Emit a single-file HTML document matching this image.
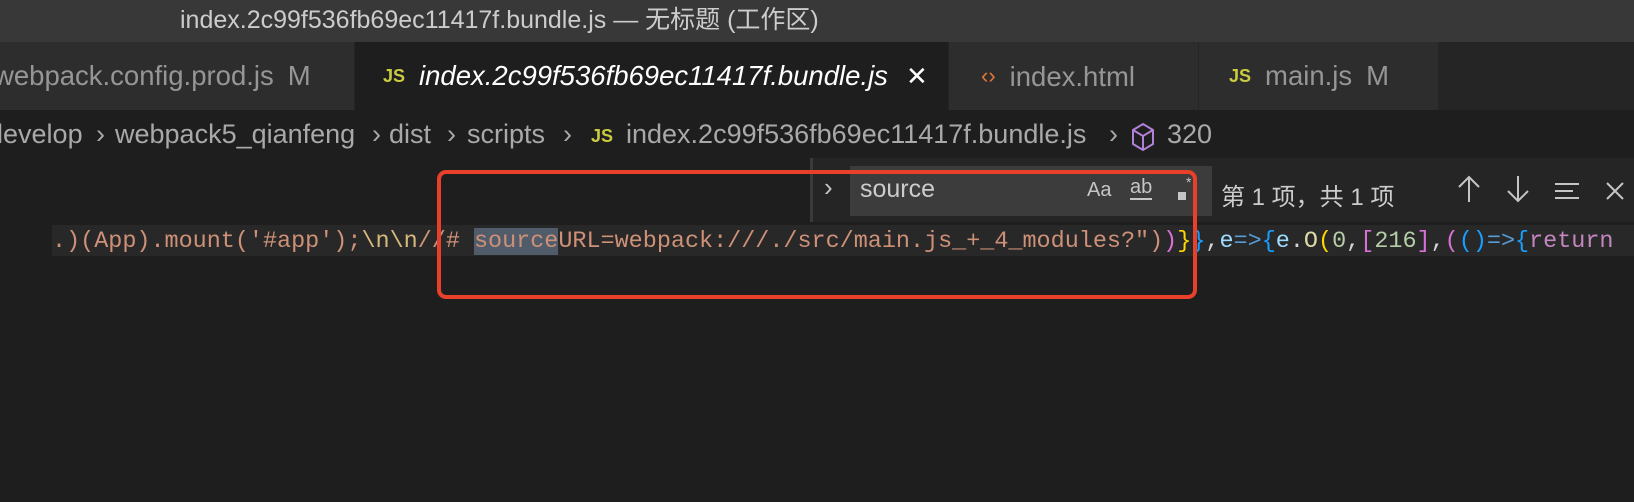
<!DOCTYPE html>
<html><head><meta charset="utf-8"><style>
*{margin:0;padding:0;box-sizing:border-box}
body{width:1634px;height:502px;overflow:hidden;background:#1e1e1e;font-family:"Liberation Sans","Noto Sans CJK SC",sans-serif;position:relative}
.abs{position:absolute;white-space:nowrap}
#title{left:0;top:0;width:1634px;height:42px;background:#383838;color:#cccccc;font-size:25px;line-height:40px}
#tabs{left:0;top:42px;width:1634px;height:68px;background:#252526}
.tab{position:absolute;top:0;height:68px;background:#2d2d2d;color:#969696;font-size:27.5px;line-height:68px;white-space:nowrap;overflow:hidden;border-right:1px solid #252526}
.js{color:#cbcb41;font-weight:bold;font-size:18px;margin-right:14px;vertical-align:3px}
#bc{left:0;top:110px;width:1634px;height:48px;color:#a9a9a9;font-size:27px;line-height:48px}
#bc span{position:absolute;top:0}
.code{font-family:"Liberation Mono",monospace;font-size:23.45px;line-height:31px}
</style></head><body>
<div class="abs" id="title"><span style="position:absolute;left:180px">index.2c99f536fb69ec11417f.bundle.js — 无标题 (工作区)</span></div>
<div class="abs" id="tabs">
 <div class="tab" style="left:0;width:355px"><span style="margin-left:-6px">webpack.config.prod.js</span><span style="margin-left:14px">M</span></div>
 <div class="tab" style="left:355px;width:594px;background:#1e1e1e;color:#fff;padding-left:28px"><span class="js">JS</span><i>index.2c99f536fb69ec11417f.bundle.js</i><span style="margin-left:18px;font-size:26px">✕</span></div>
 <div class="tab" style="left:949px;width:250px;padding-left:32px"><span style="color:#e37933;font-size:22px;margin-right:14px;vertical-align:3px">‹›</span>index.html</div>
 <div class="tab" style="left:1199px;width:240px;padding-left:30px"><span class="js">JS</span>main.js<span style="margin-left:14px">M</span></div>
</div>
<div class="abs" id="bc">
 <span style="left:-12px">develop</span><span style="left:96px">›</span>
 <span style="left:115px">webpack5_qianfeng</span><span style="left:372px">›</span>
 <span style="left:389px">dist</span><span style="left:447px">›</span>
 <span style="left:467px">scripts</span><span style="left:563px">›</span>
 <span style="left:591px;color:#cbcb41;font-weight:bold;font-size:18px;top:2px">JS</span>
 <span style="left:626px">index.2c99f536fb69ec11417f.bundle.js</span><span style="left:1109px">›</span>
 <span style="left:1131px;top:9px"><svg width="24" height="30" viewBox="0 0 24 30"><path d="M12 2L22 8V22L12 28L2 22V8Z M2 8L12 14L22 8 M12 14V28" fill="none" stroke="#b180d7" stroke-width="2"/></svg></span>
 <span style="left:1167px">320</span>
</div>
<div class="abs" style="left:52px;top:225px;width:1582px;height:31px;background:#282828"></div>
<div class="abs code" style="left:52px;top:226px;color:#ce9178">.)(App).mount('#app');<span style="color:#d7ba7d">\n\n</span>//# <span style="background:#515c6a">source</span>URL=webpack:///./src/main.js_+_4_modules?")<span style="color:#da70d6">)</span><span style="color:#ffd700">}</span><span style="color:#179fff">}</span><span style="color:#d4d4d4">,</span><span style="color:#9cdcfe">e</span><span style="color:#569cd6">=&gt;</span><span style="color:#179fff">{</span><span style="color:#9cdcfe">e</span><span style="color:#d4d4d4">.</span><span style="color:#dcdcaa">O</span><span style="color:#ffd700">(</span><span style="color:#b5cea8">0</span><span style="color:#d4d4d4">,</span><span style="color:#da70d6">[</span><span style="color:#b5cea8">216</span><span style="color:#da70d6">]</span><span style="color:#d4d4d4">,</span><span style="color:#da70d6">(</span><span style="color:#179fff">()</span><span style="color:#569cd6">=&gt;</span><span style="color:#179fff">{</span><span style="color:#c586c0">return</span></div>
<div class="abs" style="left:810px;top:158px;width:824px;height:64px;background:#252526;border-left:3px solid #3a3a3a"></div>
<div class="abs" style="left:824px;top:172px;color:#c5c5c5;font-size:26px">›</div>
<div class="abs" style="left:850px;top:166px;width:362px;height:50px;background:#3c3c3c"></div>
<div class="abs" style="left:860px;top:175px;color:#cccccc;font-size:25px">source</div>
<div class="abs" style="left:1087px;top:179px;color:#c5c5c5;font-size:20px">Aa</div>
<div class="abs" style="left:1130px;top:177px;color:#c5c5c5;font-size:20px;border-bottom:2px solid #c5c5c5;line-height:21px">ab</div>
<div class="abs" style="left:1178px;top:192px;width:8px;height:8px;background:#c5c5c5"></div>
<div class="abs" style="left:1186px;top:174px;color:#c5c5c5;font-size:14px">*</div>
<div class="abs" style="left:1221px;top:177px;color:#cccccc;font-size:24px">第 1 项，共 1 项</div>
<svg class="abs" style="left:1456px;top:174px" width="26" height="30"><path d="M13 3V28M3 13L13 3L23 13" fill="none" stroke="#c5c5c5" stroke-width="2"/></svg>
<svg class="abs" style="left:1505px;top:174px" width="26" height="30"><path d="M13 2V27M3 17L13 27L23 17" fill="none" stroke="#c5c5c5" stroke-width="2"/></svg>
<svg class="abs" style="left:1553px;top:180px" width="28" height="22"><path d="M2 4H26M2 11H20M2 18H26" stroke="#c5c5c5" stroke-width="2"/></svg>
<svg class="abs" style="left:1605px;top:181px" width="20" height="20"><path d="M2 2L18 18M18 2L2 18" stroke="#c5c5c5" stroke-width="2"/></svg>
<div class="abs" style="left:437px;top:170px;width:760px;height:129px;border:4px solid #e8402a;border-radius:9px"></div>
</body></html>
